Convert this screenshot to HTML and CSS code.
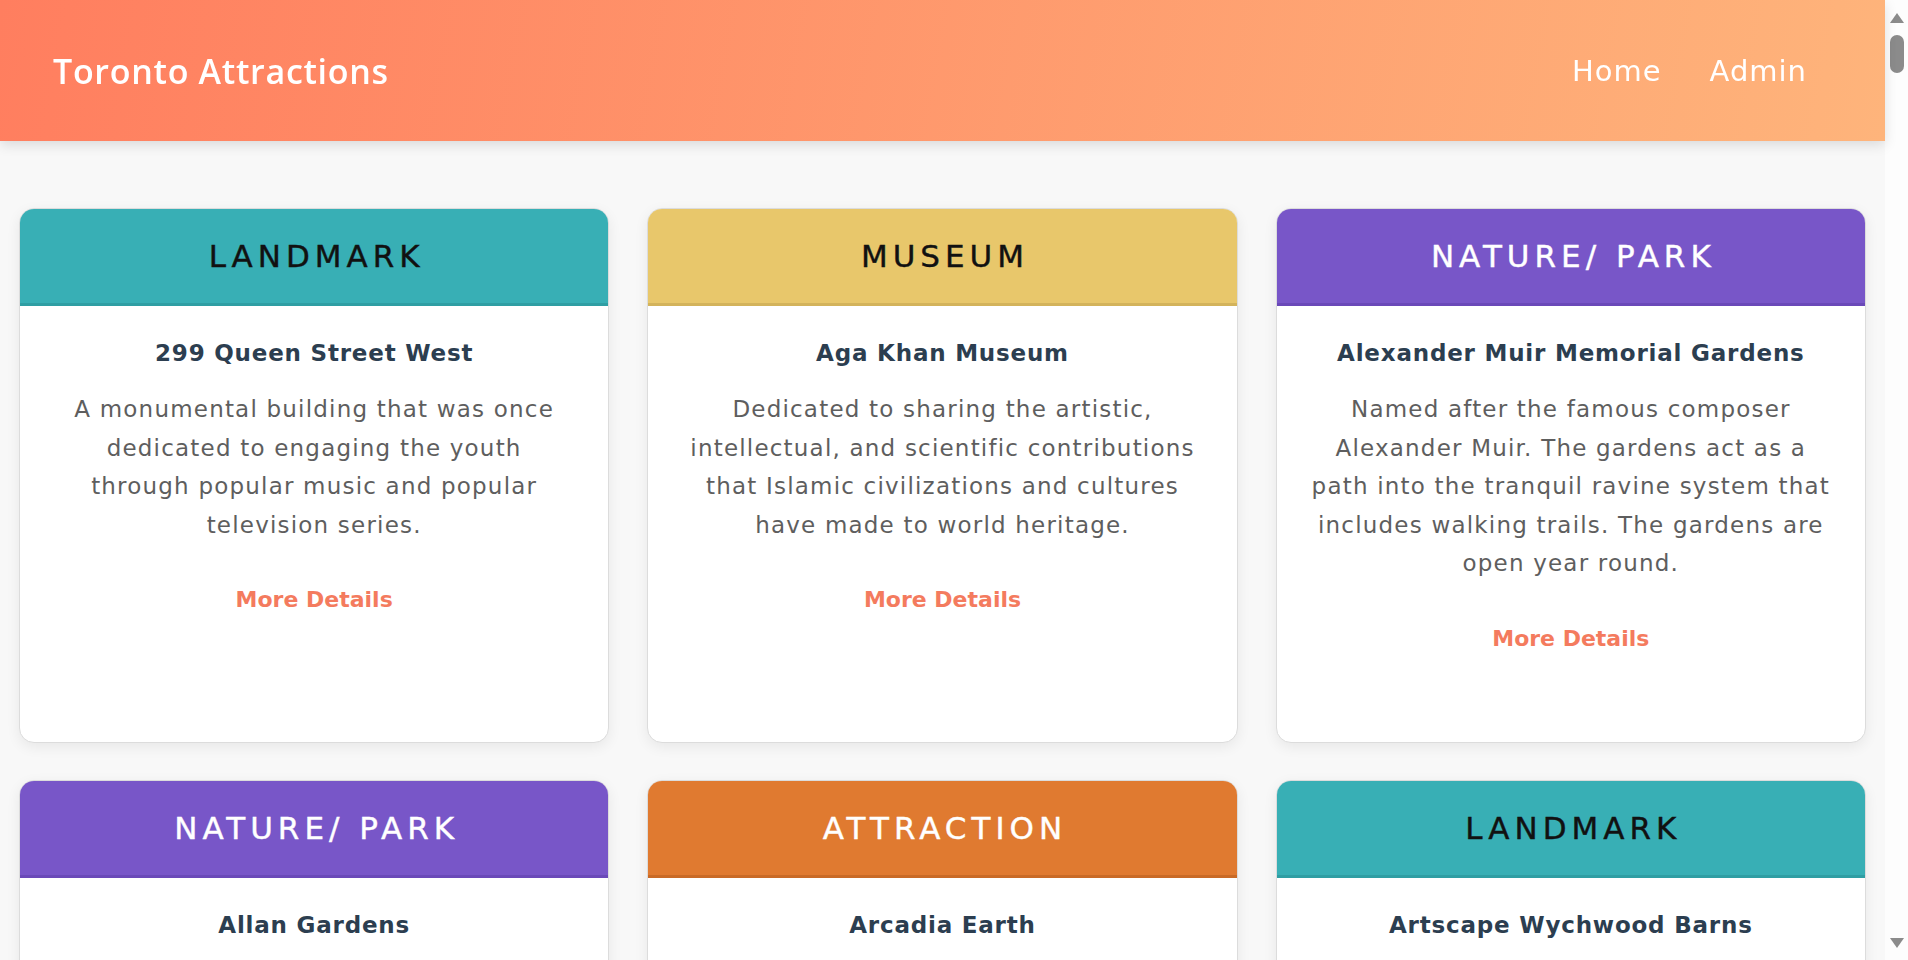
FILE: index.html
```html
<!DOCTYPE html>
<html lang="en">
<head>
<meta charset="utf-8">
<title>Toronto Attractions</title>
<link rel="stylesheet" href="styles.css">
</head>
<body>
<header class="site-header">
  <div class="brand">Toronto Attractions</div>
  <nav class="nav">
    <a href="#">Home</a>
    <a href="#">Admin</a>
  </nav>
</header>

<main class="grid">
  <article class="card">
    <div class="card-head teal">Landmark</div>
    <div class="card-body">
      <h3 class="card-title">299 Queen Street West</h3>
      <p class="card-desc">A monumental building that was once<br>dedicated to engaging the youth<br>through popular music and popular<br>television series.</p>
      <a class="more" href="#">More Details</a>
    </div>
  </article>
  <article class="card">
    <div class="card-head yellow">Museum</div>
    <div class="card-body">
      <h3 class="card-title">Aga Khan Museum</h3>
      <p class="card-desc">Dedicated to sharing the artistic,<br>intellectual, and scientific contributions<br>that Islamic civilizations and cultures<br>have made to world heritage.</p>
      <a class="more" href="#">More Details</a>
    </div>
  </article>
  <article class="card">
    <div class="card-head purple">Nature/ Park</div>
    <div class="card-body">
      <h3 class="card-title">Alexander Muir Memorial Gardens</h3>
      <p class="card-desc">Named after the famous composer<br>Alexander Muir. The gardens act as a<br>path into the tranquil ravine system that<br>includes walking trails. The gardens are<br>open year round.</p>
      <a class="more" href="#">More Details</a>
    </div>
  </article>
  <article class="card">
    <div class="card-head purple">Nature/ Park</div>
    <div class="card-body">
      <h3 class="card-title">Allan Gardens</h3>
      <p class="card-desc">One of the oldest parks in Toronto, home to a historic conservatory with six greenhouses full of plants from around the world.</p>
      <a class="more" href="#">More Details</a>
    </div>
  </article>
  <article class="card">
    <div class="card-head orange">Attraction</div>
    <div class="card-body">
      <h3 class="card-title">Arcadia Earth</h3>
      <p class="card-desc">An immersive environmental art experience that uses augmented and virtual reality to inspire change.</p>
      <a class="more" href="#">More Details</a>
    </div>
  </article>
  <article class="card">
    <div class="card-head teal">Landmark</div>
    <div class="card-body">
      <h3 class="card-title">Artscape Wychwood Barns</h3>
      <p class="card-desc">Historic streetcar repair barns transformed into a community centre for arts, culture and the environment.</p>
      <a class="more" href="#">More Details</a>
    </div>
  </article>
</main>

<aside class="scrollbar" aria-hidden="true">
  <svg class="sb-arrow" width="14" height="10" viewBox="0 0 14 10"><polygon points="7,0 14,10 0,10" fill="#8b8b8b"/></svg>
  <div class="sb-thumb"></div>
  <div class="sb-track"></div>
  <svg class="sb-arrow" width="14" height="10" viewBox="0 0 14 10"><polygon points="0,0 14,0 7,10" fill="#8b8b8b"/></svg>
</aside>
</body>
</html>
```
FILE: styles.css
```css
html {
  overflow: hidden;
}

body {
  margin: 0;
  padding-right: 23px;
  background: #f8f8f8;
  font-family: "DejaVu Sans", Inter, sans-serif;
}

.site-header {
  position: relative;
  z-index: 1;
  height: 141px;
  display: flex;
  align-items: center;
  justify-content: space-between;
  padding: 0 78px 0 53px;
  background: linear-gradient(100deg, #ff7e5f 0%, #feb47b 100%);
  box-shadow: 0 4px 12px rgba(0, 0, 0, 0.12);
}

.brand {
  font-family: "Open Sans", "Noto Sans", sans-serif;
  font-weight: 600;
  font-size: 34px;
  letter-spacing: 0.7px;
  color: #fff;
}

.nav {
  display: flex;
  gap: 48px;
}

.nav a {
  color: #fff;
  text-decoration: none;
  font-size: 29px;
  letter-spacing: 1px;
}

.grid {
  display: grid;
  grid-template-columns: repeat(3, 1fr);
  gap: 37px 38px;
  padding: 67px 19px 40px;
}

.card {
  background: #fff;
  border: 1px solid #dcdcdc;
  border-radius: 15px;
  overflow: hidden;
  box-shadow: 0 4px 14px rgba(0, 0, 0, 0.07);
  display: flex;
  flex-direction: column;
}

.card-head {
  height: 94px;
  border-bottom: 3px solid;
  display: flex;
  align-items: center;
  justify-content: center;
  padding-left: 5px;
  font-size: 31px;
  letter-spacing: 5px;
  text-transform: uppercase;
  -webkit-text-stroke: 0.4px currentColor;
}

.teal {
  background: #38afb5;
  border-color: #2f9ea3;
  color: #111;
}

.yellow {
  background: #e8c76b;
  border-color: #d3b35b;
  color: #111;
}

.purple {
  background: #7856c8;
  border-color: #6a49b8;
  color: #fff;
}

.orange {
  background: #e07a30;
  border-color: #c96a26;
  color: #fff;
}

.card-body {
  padding: 33px 20px 80px;
  text-align: center;
}

.card-title {
  margin: 0 0 23px;
  font-size: 23px;
  line-height: 28px;
  font-weight: 700;
  letter-spacing: 0.8px;
  color: #2c3e50;
}

.card-desc {
  margin: 0;
  font-size: 23px;
  line-height: 38.5px;
  font-weight: 400;
  letter-spacing: 1.2px;
  color: #5e5e5e;
}

.more {
  display: block;
  width: fit-content;
  margin: 32px auto 0;
  padding: 10px 20px;
  font-size: 22px;
  line-height: 27px;
  font-weight: 700;
  color: #f47b5e;
  text-decoration: none;
}

.scrollbar {
  position: fixed;
  top: 0;
  right: 0;
  bottom: 0;
  width: 23px;
  background: #fdfdfd;
  display: flex;
  flex-direction: column;
  align-items: center;
  padding: 13px 0 12px;
  box-sizing: border-box;
}

.sb-thumb {
  width: 14px;
  height: 38px;
  margin-top: 12px;
  border-radius: 7px;
  background: #8b8b8b;
}

.sb-track {
  flex: 1;
}
```
